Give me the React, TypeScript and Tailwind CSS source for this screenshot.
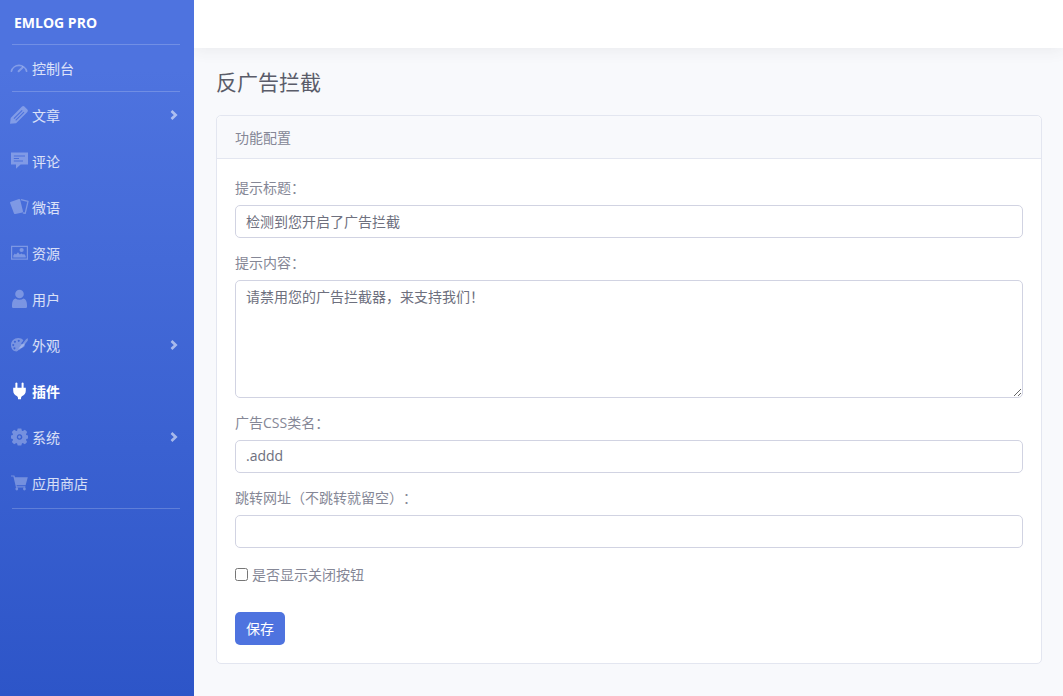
import React, { ReactNode, useState } from "react";
import { clsx } from "clsx";

function Icon({ children }: { children: ReactNode }) {
  return (
    <svg viewBox="0 0 20 20" className="size-5 shrink-0 fill-current" aria-hidden="true">
      {children}
    </svg>
  );
}

const icons: Record<string, ReactNode> = {
  dashboard: (
    <g fill="none" stroke="currentColor" strokeWidth="1.7" strokeLinecap="round">
      <path d="M2.4 13.2A7.8 7.4 0 0 1 17.6 13.2" />
      <path d="M9.6 13.2 13.6 9.4" strokeWidth="2" />
    </g>
  ),
  pencil: (
    <path
      fillRule="evenodd"
      d="M1 18.8 1.7 12.9 13 1.6Q14.2.5 15.4 1.6L18.4 4.6Q19.5 5.8 18.4 7L7.1 18.2ZM4.5 13.2 5.3 14 13.6 5.7 12.8 4.9ZM6.3 15 7.1 15.8 15.4 7.5 14.6 6.7Z"
    />
  ),
  comment: (
    <path
      fillRule="evenodd"
      d="M2 1.5H19V13.4H11.6L7 17.8V13.4H2ZM4.8 4.6V5.6H16V4.6ZM4.8 7V8H10V7ZM4.8 9.6V10.6H14V9.6Z"
    />
  ),
  cards: (
    <>
      <path d="M1.4 5 10 2Q10.8 1.8 11.1 2.6L14 14.3Q14.1 15.1 13.4 15.4L6.4 17.1Q5.4 17.2 5 16.4L1.1 6.1Q.9 5.3 1.4 5Z" />
      <path d="M12 2.7 19 4.4 16.2 16.3 13.8 15.9" fill="none" stroke="currentColor" strokeWidth="1.3" strokeLinejoin="round" />
    </>
  ),
  image: (
    <>
      <path fillRule="evenodd" d="M2 2.8H19V16.8H2ZM3.2 4V15.6H17.8V4Z" />
      <path d="M4.3 14.5V12.5L5.8 10.4 7 11.4 9 9.2 10.8 11.4 12.4 10.6 14 11.6 15.2 11 16.7 13V14.5Z" />
      <circle cx="12.6" cy="7" r="2.1" />
    </>
  ),
  user: (
    <>
      <circle cx="10.5" cy="5" r="4.3" />
      <path d="M6.4 9.4Q10.5 12 14.6 9.4 18 10.5 18 16V18Q18 19 16.6 19H4.4Q3 19 3 18V16Q3 10.5 6.4 9.4Z" />
    </>
  ),
  palette: (
    <>
      <path
        fillRule="evenodd"
        d="M9.3 3C5.1 3 2 6 2 9.9 2 13.6 4.4 16.4 7.6 16.4 9.4 16.4 9.1 14.8 10.2 13.8 11.6 12.5 14.8 13.4 15.8 10.4L15.4 8.2 13.8 9.6 12 8.4 14.4 5.4C13.2 3.8 11.3 3 9.3 3ZM9.8 4.7A1 1 0 1 1 9.7 4.7ZM6 5.8A1 1 0 1 1 5.9 5.8ZM4.3 9A1 1 0 1 1 4.2 9ZM5.5 12.2A1 1 0 1 1 5.4 12.2Z"
      />
      <path d="M19 3.3 18.7 5.8 12.8 13.1Q10.9 14.8 9.1 15.2 9.6 13 11.2 11.4L17.2 4.1Z" />
    </>
  ),
  plug: (
    <path d="M6.4 2Q7.4.8 8.4 2V6.8H12.6V2Q13.6.8 14.6 2V6.8H16.8V9.6Q16.8 13.8 12.8 15.3L12 16.7V18.2H9V16.7L8.2 15.3Q4.2 13.8 4.2 9.6V6.8H6.4Z" />
  ),
  gear: (
    <path
      fillRule="evenodd"
      d="M8.7 1.4H12.3L12.9 3.7 13.7 4 15.9 2.8 18.2 5.1 17 7.2 17.3 8 19 8.4V11.6L17.3 12.1 17 12.9 18.1 15 15.9 17.3 13.7 16.1 12.9 16.4 12.3 18.4H8.7L8.1 16.4 7.3 16.1 5.1 17.3 2.9 15 4 12.9 3.7 12.1 2 11.6V8.4L3.7 8 4 7.2 2.8 5.1 5.1 2.8 7.3 4 8.1 3.7ZM10.5 7.2A2.8 2.8 0 1 0 10.6 7.2ZM10.5 8.6A1.4 1.4 0 1 1 10.4 8.6Z"
    />
  ),
  cart: (
    <>
      <path d="M2 2.4H5.4L6 4.2H18.8L16.6 12.2H7.5L7.9 13.2H16.4V14.4H7L4.4 3.5H2Z" />
      <circle cx="7.8" cy="16" r="1.4" />
      <circle cx="15.4" cy="16" r="1.4" />
    </>
  ),
};

interface NavItemProps {
  icon: string;
  label: string;
  active?: boolean;
  expandable?: boolean;
}

function NavItem({ icon, label, active, expandable }: NavItemProps) {
  return (
    <li>
      <a
        href="#"
        className={clsx("flex h-[46px] items-center gap-[3px] pr-4 pl-[9px]", active ? "font-bold text-white" : "text-white/80")}
      >
        <span className={active ? "text-white" : "text-white/30"}>
          <Icon>{icons[icon]}</Icon>
        </span>
        <span className="flex-1">{label}</span>
        {expandable && (
          <svg viewBox="0 0 8 10" className="h-2.5 w-2 text-white/55" aria-hidden="true">
            <path d="M1.5 1 5.7 5 1.5 9" fill="none" stroke="currentColor" strokeWidth="2.6" />
          </svg>
        )}
      </a>
    </li>
  );
}

const menu: NavItemProps[] = [
  { icon: "pencil", label: "文章", expandable: true },
  { icon: "comment", label: "评论" },
  { icon: "cards", label: "微语" },
  { icon: "image", label: "资源" },
  { icon: "user", label: "用户" },
  { icon: "palette", label: "外观", expandable: true },
  { icon: "plug", label: "插件", active: true },
  { icon: "gear", label: "系统", expandable: true },
  { icon: "cart", label: "应用商店" },
];

function Sidebar() {
  return (
    <nav className="relative z-10 w-[194px] shrink-0 bg-linear-to-b from-[#4e73df] from-10% to-[#2d55c8]">
      <a href="#" className="flex h-11 items-center px-3.5 text-[14px] font-bold text-white">
        EMLOG PRO
      </a>
      <hr className="mr-3.5 ml-3 border-white/20" />
      <ul>
        <NavItem icon="dashboard" label="控制台" />
      </ul>
      <hr className="mr-3.5 ml-3 border-white/20" />
      <ul className="pb-0.5">
        {menu.map((item) => (
          <NavItem key={item.label} {...item} />
        ))}
      </ul>
      <hr className="mr-3.5 ml-3 border-white/20" />
    </nav>
  );
}

const control =
  "block w-full rounded-[5px] border border-[#d1d3e2] bg-white px-2.5 text-[#6e707e] outline-none focus:border-[#bac8f3]";

function Field({ id, label, children }: { id: string; label: string; children: ReactNode }) {
  return (
    <div className="mb-3.5">
      <label htmlFor={id} className="mb-[7px] block">
        {label}
      </label>
      {children}
    </div>
  );
}

export default function App() {
  const [title, setTitle] = useState("检测到您开启了广告拦截");
  const [content, setContent] = useState("请禁用您的广告拦截器，来支持我们！");
  const [cssClass, setCssClass] = useState(".addd");
  const [url, setUrl] = useState("");
  const [closable, setClosable] = useState(false);

  return (
    <div
      lang="zh-CN"
      className="flex min-h-screen bg-[#f8f9fc] font-['Open_Sans','Noto_Sans_CJK_SC',sans-serif] text-[14px] leading-[21px] text-[#858796] [text-spacing-trim:space-all]"
    >
      <Sidebar />
      <div className="flex min-w-0 flex-1 flex-col">
        <header className="h-12 bg-white shadow-[0_2px_16px_rgba(58,59,69,0.08)]" />
        <main className="pt-[22px] pr-[21px] pb-8 pl-[22px]">
          <h1 className="mb-5 text-[21px] leading-[25px] text-[#5a5c69]">反广告拦截</h1>
          <section className="rounded-[5px] border border-[#e3e6f0] bg-white">
            <div className="rounded-t-[5px] border-b border-[#e3e6f0] bg-[#f8f9fc] px-[18px] pt-[11px] pb-2.5">功能配置</div>
            <form className="px-[18px] pt-[18px] pb-[18px]" onSubmit={(e) => e.preventDefault()}>
              <Field id="title" label="提示标题：">
                <input id="title" className={clsx(control, "h-[33px] pb-0.5")} value={title} onChange={(e) => setTitle(e.target.value)} />
              </Field>
              <Field id="content" label="提示内容：">
                <textarea
                  id="content"
                  className={clsx(control, "h-[118px] py-[5px]")}
                  value={content}
                  onChange={(e) => setContent(e.target.value)}
                />
              </Field>
              <Field id="css-class" label="广告CSS类名：">
                <input id="css-class" className={clsx(control, "h-[33px] pb-0.5")} value={cssClass} onChange={(e) => setCssClass(e.target.value)} />
              </Field>
              <Field id="url" label="跳转网址（不跳转就留空）：">
                <input id="url" className={clsx(control, "h-[33px] pb-0.5")} value={url} onChange={(e) => setUrl(e.target.value)} />
              </Field>
              <label className="flex h-6 items-center gap-1">
                <input type="checkbox" className="size-[13px]" checked={closable} onChange={(e) => setClosable(e.target.checked)} />
                是否显示关闭按钮
              </label>
              <button type="submit" className="mt-[26px] h-[33px] rounded-[5px] bg-[#4e73df] px-[11px] text-white hover:bg-[#2e59d9]">
                保存
              </button>
            </form>
          </section>
        </main>
      </div>
    </div>
  );
}
